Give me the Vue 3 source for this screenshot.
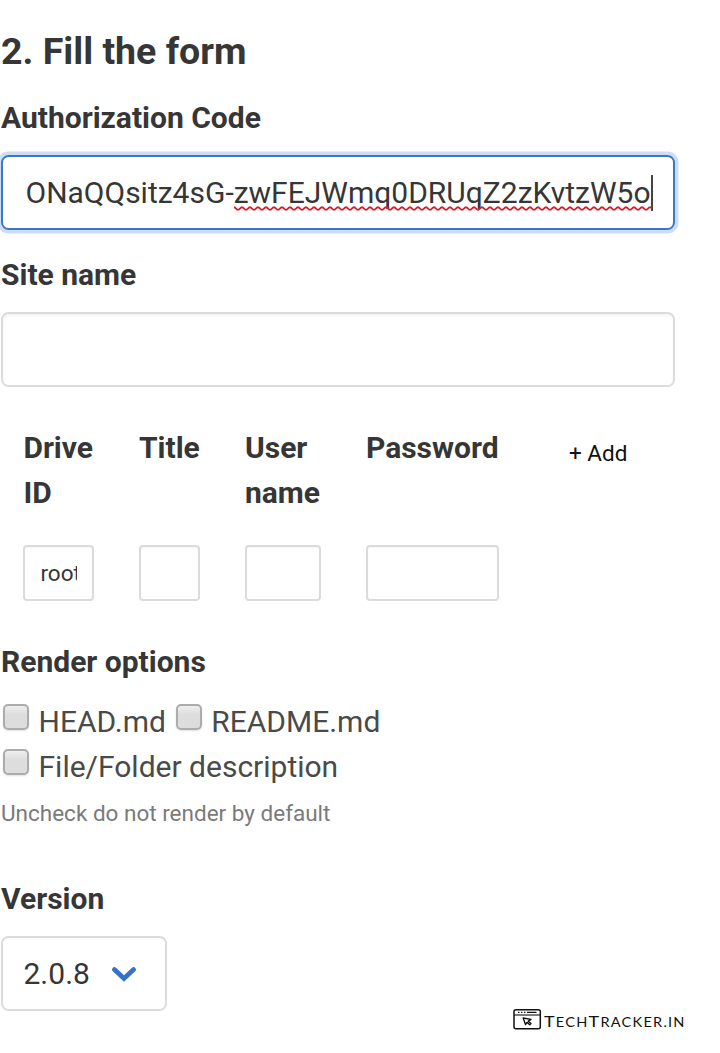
<script setup>
import { ref } from 'vue'

const drives = [
  { label: 'Drive ID', name: 'drive', value: 'root' },
  { label: 'Title', name: 'name', value: '' },
  { label: 'User name', name: 'user', value: '' },
  { label: 'Password', name: 'password', value: '' },
]
const version = ref('2.0.8')
</script>

<template>
  <main class="page">
    <h2 class="title">2. Fill the form</h2>

    <section class="field">
      <div class="label">Authorization Code</div>
      <div class="input focused">
        <span class="code">ONaQQsitz4sG-<span class="misspelt">zwFEJWmq0DRUqZ2zKvtzW5o<svg class="squiggle" width="418" height="5">
          <defs>
            <pattern id="wave" width="8" height="5" patternUnits="userSpaceOnUse">
              <path d="M-2 2.5Q0 -0.1 2 2.5T6 2.5T10 2.5" fill="none" stroke="#d3202f" stroke-width="1.9" />
            </pattern>
          </defs>
          <rect width="418" height="5" fill="url(#wave)" />
        </svg></span></span>
        <i class="caret"></i>
      </div>
    </section>

    <section class="field">
      <div class="label">Site name</div>
      <div class="input"></div>
    </section>

    <section class="drives">
      <div v-for="d in drives" :key="d.name" class="drive-col" :class="d.name">
        <div class="head">{{ d.label }}</div>
        <div class="small-input"><span>{{ d.value }}</span></div>
      </div>
      <div class="add">+ Add</div>
    </section>

    <section class="field render">
      <div class="label">Render options</div>
      <div class="options">
        <div class="option"><i class="box"></i><span>HEAD.md</span></div>
        <div class="option"><i class="box"></i><span>README.md</span></div>
      </div>
      <div class="options">
        <div class="option"><i class="box"></i><span>File/Folder description</span></div>
      </div>
      <p class="help">Uncheck do not render by default</p>
    </section>

    <section class="field version">
      <div class="label">Version</div>
      <div class="select">
        <span>{{ version }}</span>
        <svg width="26" height="20" viewBox="0 0 26 20">
          <path d="M3.4 5.6L13 14.4L22.6 5.6" fill="none" stroke="#3572cb" stroke-width="4.8" stroke-linecap="round" stroke-linejoin="miter" />
        </svg>
      </div>
    </section>

    <footer class="mark">
      <svg width="29" height="22" viewBox="0 0 29 22" fill="none" stroke="#111">
        <rect x="1" y="1.7" width="26.3" height="19" rx="2" stroke-width="1.5" />
        <path d="M1 7H27" stroke-width="1.1" />
        <path d="M5 4.4h1.4M8 4.4h1.4M11 4.4h1.4M14 4.4h9.5" stroke-width="1.2" />
        <path d="M10.2 10L18 11.4L15.3 13.2L18 15.6L16.8 16.8L14 14.4L12.5 16.6Z" stroke-width="1.4" stroke-linejoin="round" />
      </svg>
      <span class="brand">T<small>ECH</small>T<small>RACKER.IN</small></span>
    </footer>
  </main>
</template>

<style>
body {
  background: #fff;
}
</style>

<style scoped>
.page {
  box-sizing: border-box;
  width: 720px;
  height: 1053px;
  overflow: hidden;
  position: relative;
  padding: 29px 0 0 1px;
  font: 30px/45px Roboto, sans-serif;
  color: #4a4a4a;
  background: #fff;
}
.title {
  margin: 0 0 21px;
  font-size: 37.5px;
  line-height: 45px;
  font-weight: 700;
  color: #363636;
}
.label {
  margin-bottom: 15px;
  font-weight: 700;
  color: #363636;
  white-space: nowrap;
}
.input {
  box-sizing: border-box;
  width: 674px;
  height: 75px;
  border: 2px solid #dbdbdb;
  border-radius: 7.5px;
  box-shadow: inset 0 2px 3px rgba(10, 10, 10, 0.05);
  display: flex;
  align-items: center;
  padding: 0 20px 0 22.5px;
  color: #363636;
}
.field + .field {
  margin-top: 22.3px;
}
.input.focused {
  border-color: #3c77c4;
  box-shadow: 0 0 0 3.5px #cdddf4;
}
.code {
  white-space: nowrap;
}
.misspelt {
  position: relative;
}
.squiggle {
  position: absolute;
  left: 0;
  bottom: -1px;
}
.caret {
  width: 2px;
  height: 36px;
  background: #444;
}
.drives {
  display: flex;
  margin: 37.7px 0 0 22.4px;
  height: 176px;
}
.drive-col {
  margin-right: 45px;
  color: #363636;
}
.drive {
  width: 70.6px;
}
.name {
  width: 61px;
}
.user {
  width: 76px;
}
.password {
  width: 133px;
}
.head {
  height: 90px;
  margin-bottom: 30px;
  font-weight: 700;
}
.small-input {
  box-sizing: border-box;
  height: 56px;
  border: 2px solid #dbdbdb;
  border-radius: 4px;
  padding: 0 15px;
  box-shadow: inset 0 1px 2px rgba(10, 10, 10, 0.04);
  font-size: 22.5px;
  font-weight: 400;
  line-height: 52px;
}
.small-input span {
  display: block;
  overflow: hidden;
}
.add {
  margin: 6px 0 0 25px;
  font-size: 22.5px;
  color: #111;
  white-space: nowrap;
}
.render {
  margin-top: 38px;
}
.options {
  display: flex;
  gap: 7.8px;
  height: 45px;
}
.option {
  display: flex;
  white-space: nowrap;
}
.box {
  box-sizing: border-box;
  width: 26px;
  height: 26px;
  margin: 5px 9.5px 0 2px;
  border: 2px solid #acacac;
  border-radius: 5px;
  background: linear-gradient(#eeeeee, #dddddd 40%, #dddddd);
  box-shadow: 0 1px 2px rgba(0, 0, 0, 0.12);
}
.help {
  margin: 8px 0 0;
  font-size: 22.5px;
  line-height: 33.75px;
  color: #7a7a7a;
}
.field.version {
  margin-top: 45.5px;
}
.select {
  box-sizing: border-box;
  width: 166px;
  height: 75px;
  border: 2px solid #dbdbdb;
  border-radius: 7.5px;
  display: flex;
  align-items: center;
  padding-left: 20.5px;
  gap: 21.5px;
  color: #363636;
}
.mark {
  position: absolute;
  left: 513px;
  top: 1008px;
  display: flex;
  align-items: center;
  height: 22px;
}
.brand {
  margin: 4px 0 0 2px;
  font: 16px/22px Lato, sans-serif;
  letter-spacing: 1.1px;
  color: #111;
  white-space: nowrap;
  transform: scaleX(1.12);
  transform-origin: 0 50%;
}
.brand small {
  font-size: 13px;
}
</style>
